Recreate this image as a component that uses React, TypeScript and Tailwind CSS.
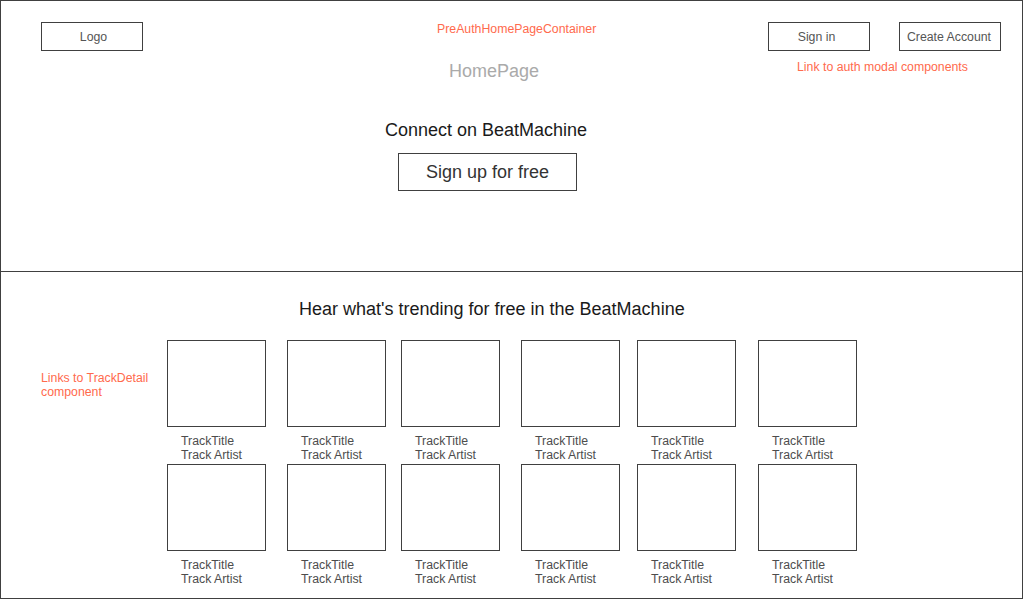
const tracks = [
  { id: 1, ml: "ml-0" },
  { id: 2, ml: "ml-[21px]" },
  { id: 3, ml: "ml-[15px]" },
  { id: 4, ml: "ml-[21px]" },
  { id: 5, ml: "ml-[17px]" },
  { id: 6, ml: "ml-[22px]" },
];

function TrackTile() {
  return (
    <div className="flex flex-col">
      <div className="w-[99px] h-[87px] border border-[#404040]"></div>
      <div className="mt-[7px] pl-[14px] text-[12.3px] leading-[14px] text-[#4d4d4d]">
        <div>TrackTitle</div>
        <div>Track Artist</div>
      </div>
    </div>
  );
}

export default function App() {
  return (
    <div
      className="w-[1023px] h-[599px] border border-[#404040] bg-white flex flex-col"
      style={{ fontFamily: '"Liberation Sans", Arial, sans-serif' }}
    >
      {/* Hero section */}
      <section className="h-[271px] border-b border-[#404040] flex items-start">
        <div className="ml-[40px] mt-[21px] w-[102px] h-[29px] border border-[#404040] flex items-center justify-center pl-[3px] text-[12.3px] leading-[14px] text-[#555]">
          Logo
        </div>

        <div className="ml-[242px] w-[212px] flex flex-col items-start">
          <p className="ml-[52px] mt-[21px] text-[12.3px] leading-[14px] text-[#ff6a4d] whitespace-nowrap">
            PreAuthHomePageContainer
          </p>
          <p className="ml-[64px] mt-[25px] text-[18px] leading-[21px] text-[#aaaaaa]">HomePage</p>
          <h1 className="mt-[38px] text-[18px] leading-[21px] text-[#1a1a1a] whitespace-nowrap">
            Connect on BeatMachine
          </h1>
          <button className="ml-[13px] mt-[12px] w-[179px] h-[38px] border border-[#404040] text-[18px] leading-[21px] text-[#333]">
            Sign up for free
          </button>
        </div>

        <div className="ml-[171px] mt-[21px] flex flex-col items-start">
          <div className="flex">
            <button className="w-[102px] h-[29px] border border-[#404040] pr-[5px] text-[12.3px] leading-[14px] text-[#555]">
              Sign in
            </button>
            <button className="ml-[29px] w-[102px] h-[29px] border border-[#404040] pr-[2px] text-[12.3px] leading-[14px] text-[#555] whitespace-nowrap">
              Create Account
            </button>
          </div>
          <p className="ml-[29px] mt-[9px] text-[12.3px] leading-[14px] text-[#ff6a4d] whitespace-nowrap">
            Link to auth modal components
          </p>
        </div>
      </section>

      {/* Trending section */}
      <section className="flex-1 flex flex-col">
        <h2 className="ml-[298px] mt-[27px] text-[18px] leading-[21px] text-[#1a1a1a]">
          Hear what's trending for free in the BeatMachine
        </h2>
        <div className="mt-[20px] flex items-start">
          <p className="ml-[40px] mt-[31px] w-[126px] pr-[14px] text-[12.3px] leading-[14px] text-[#ff6a4d]">
            Links to TrackDetail component
          </p>
          {tracks.map((t) => (
            <div key={t.id} className={`${t.ml} flex flex-col gap-[2px]`}>
              <TrackTile />
              <TrackTile />
            </div>
          ))}
        </div>
      </section>
    </div>
  );
}
